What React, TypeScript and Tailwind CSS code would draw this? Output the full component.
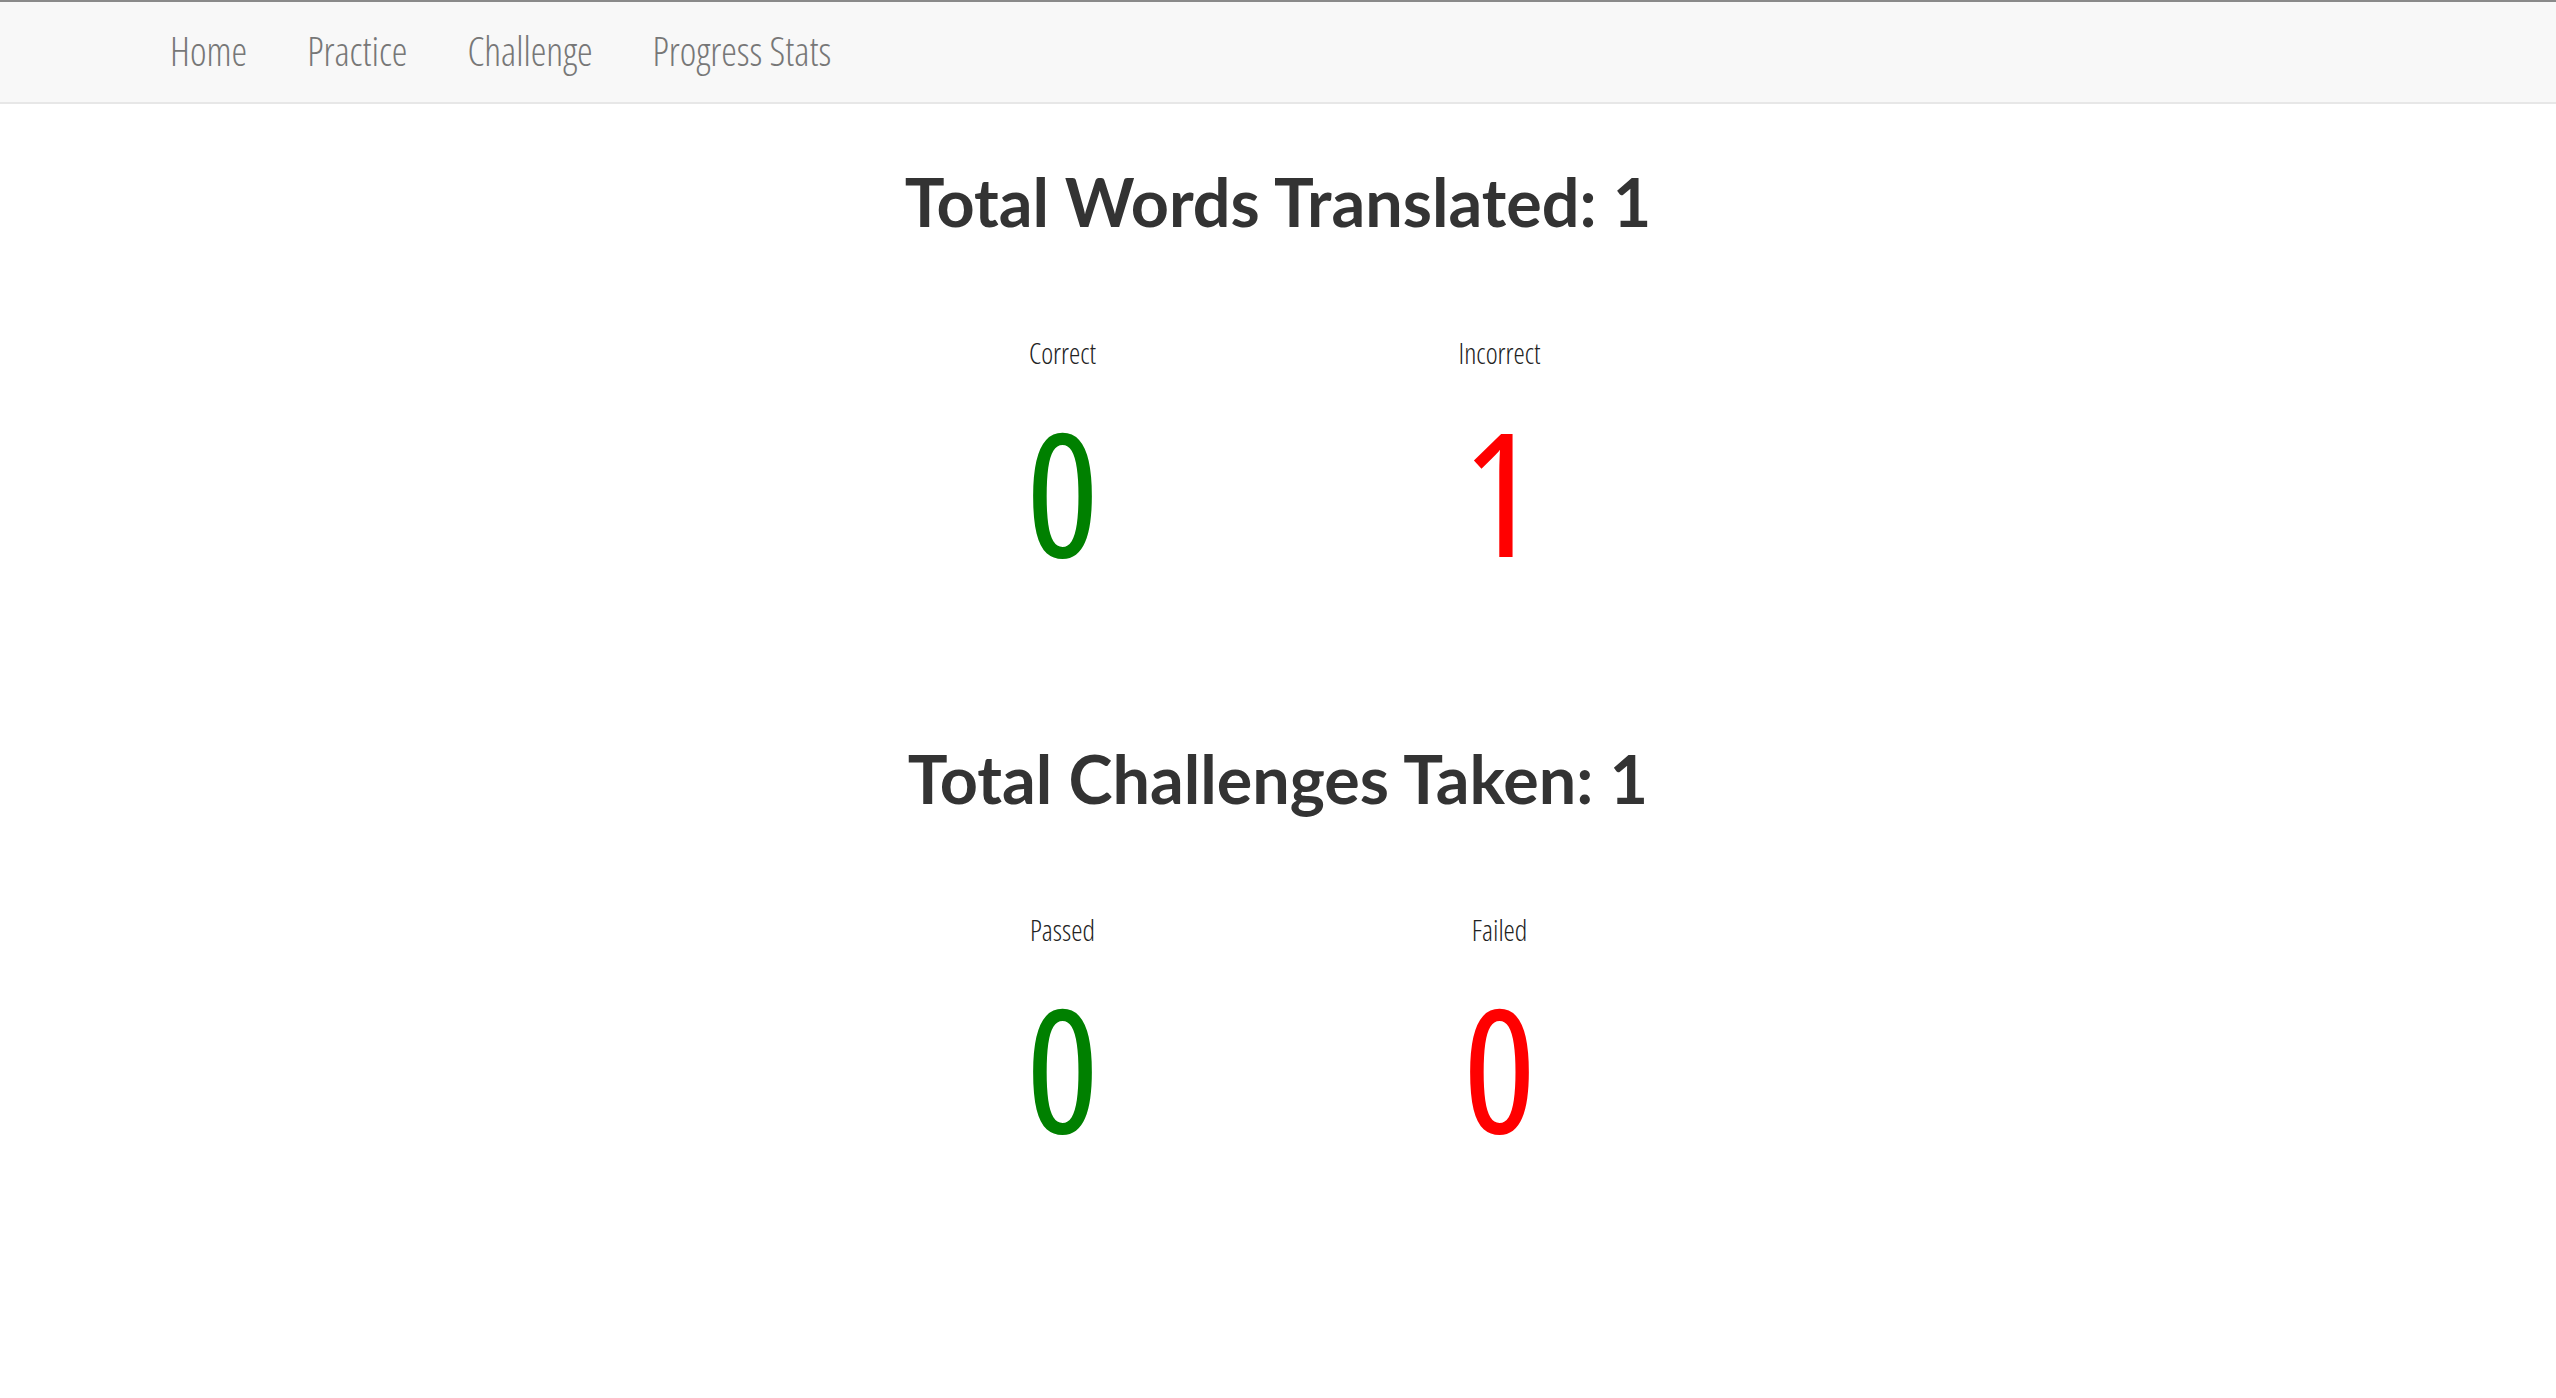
import React from 'react';

const navLinks = ['Home', 'Practice', 'Challenge', 'Progress Stats'];

const condensed = "[font-family:'Open_Sans',sans-serif] [font-stretch:75%]";

function StatBlock({ title, left, right }: { title: string; left: { label: string; value: number }; right: { label: string; value: number } }) {
  return (
    <section className="flex flex-col items-center">
      <h1 className="text-[66.5px] leading-[1.1] font-bold text-[#333] [font-family:Lato,sans-serif]">{title}</h1>
      <div className="mt-[101px] flex pl-[6px]">
        {[{ ...left, color: 'text-[#008000]' }, { ...right, color: 'text-[#ff0000]' }].map((s) => (
          <div key={s.label} className="w-[437px] flex flex-col items-center">
            <div className={`text-[28.5px] leading-none font-light text-[#222] ${condensed}`}>{s.label}</div>
            <div className={`mt-[28px] text-[172px] leading-[1.1] font-normal ${s.color} ${condensed}`}>{s.value}</div>
          </div>
        ))}
      </div>
    </section>
  );
}

export default function App() {
  return (
    <div className="min-h-screen bg-white">
      <nav className="h-[104px] bg-[#f8f8f8] border-t-2 border-t-[#8a8a8a] border-b-2 border-b-[#e7e7e7]">
        <ul className="flex h-full items-center pl-[140px]">
          {navLinks.map((l) => (
            <li key={l} className={`px-[30px] text-[39.5px] font-light text-[#777] ${condensed}`}>{l}</li>
          ))}
        </ul>
      </nav>
      <main className="flex flex-col items-center pt-[61px] gap-[157px]">
        <StatBlock title="Total Words Translated: 1" left={{ label: 'Correct', value: 0 }} right={{ label: 'Incorrect', value: 1 }} />
        <StatBlock title="Total Challenges Taken: 1" left={{ label: 'Passed', value: 0 }} right={{ label: 'Failed', value: 0 }} />
      </main>
    </div>
  );
}
